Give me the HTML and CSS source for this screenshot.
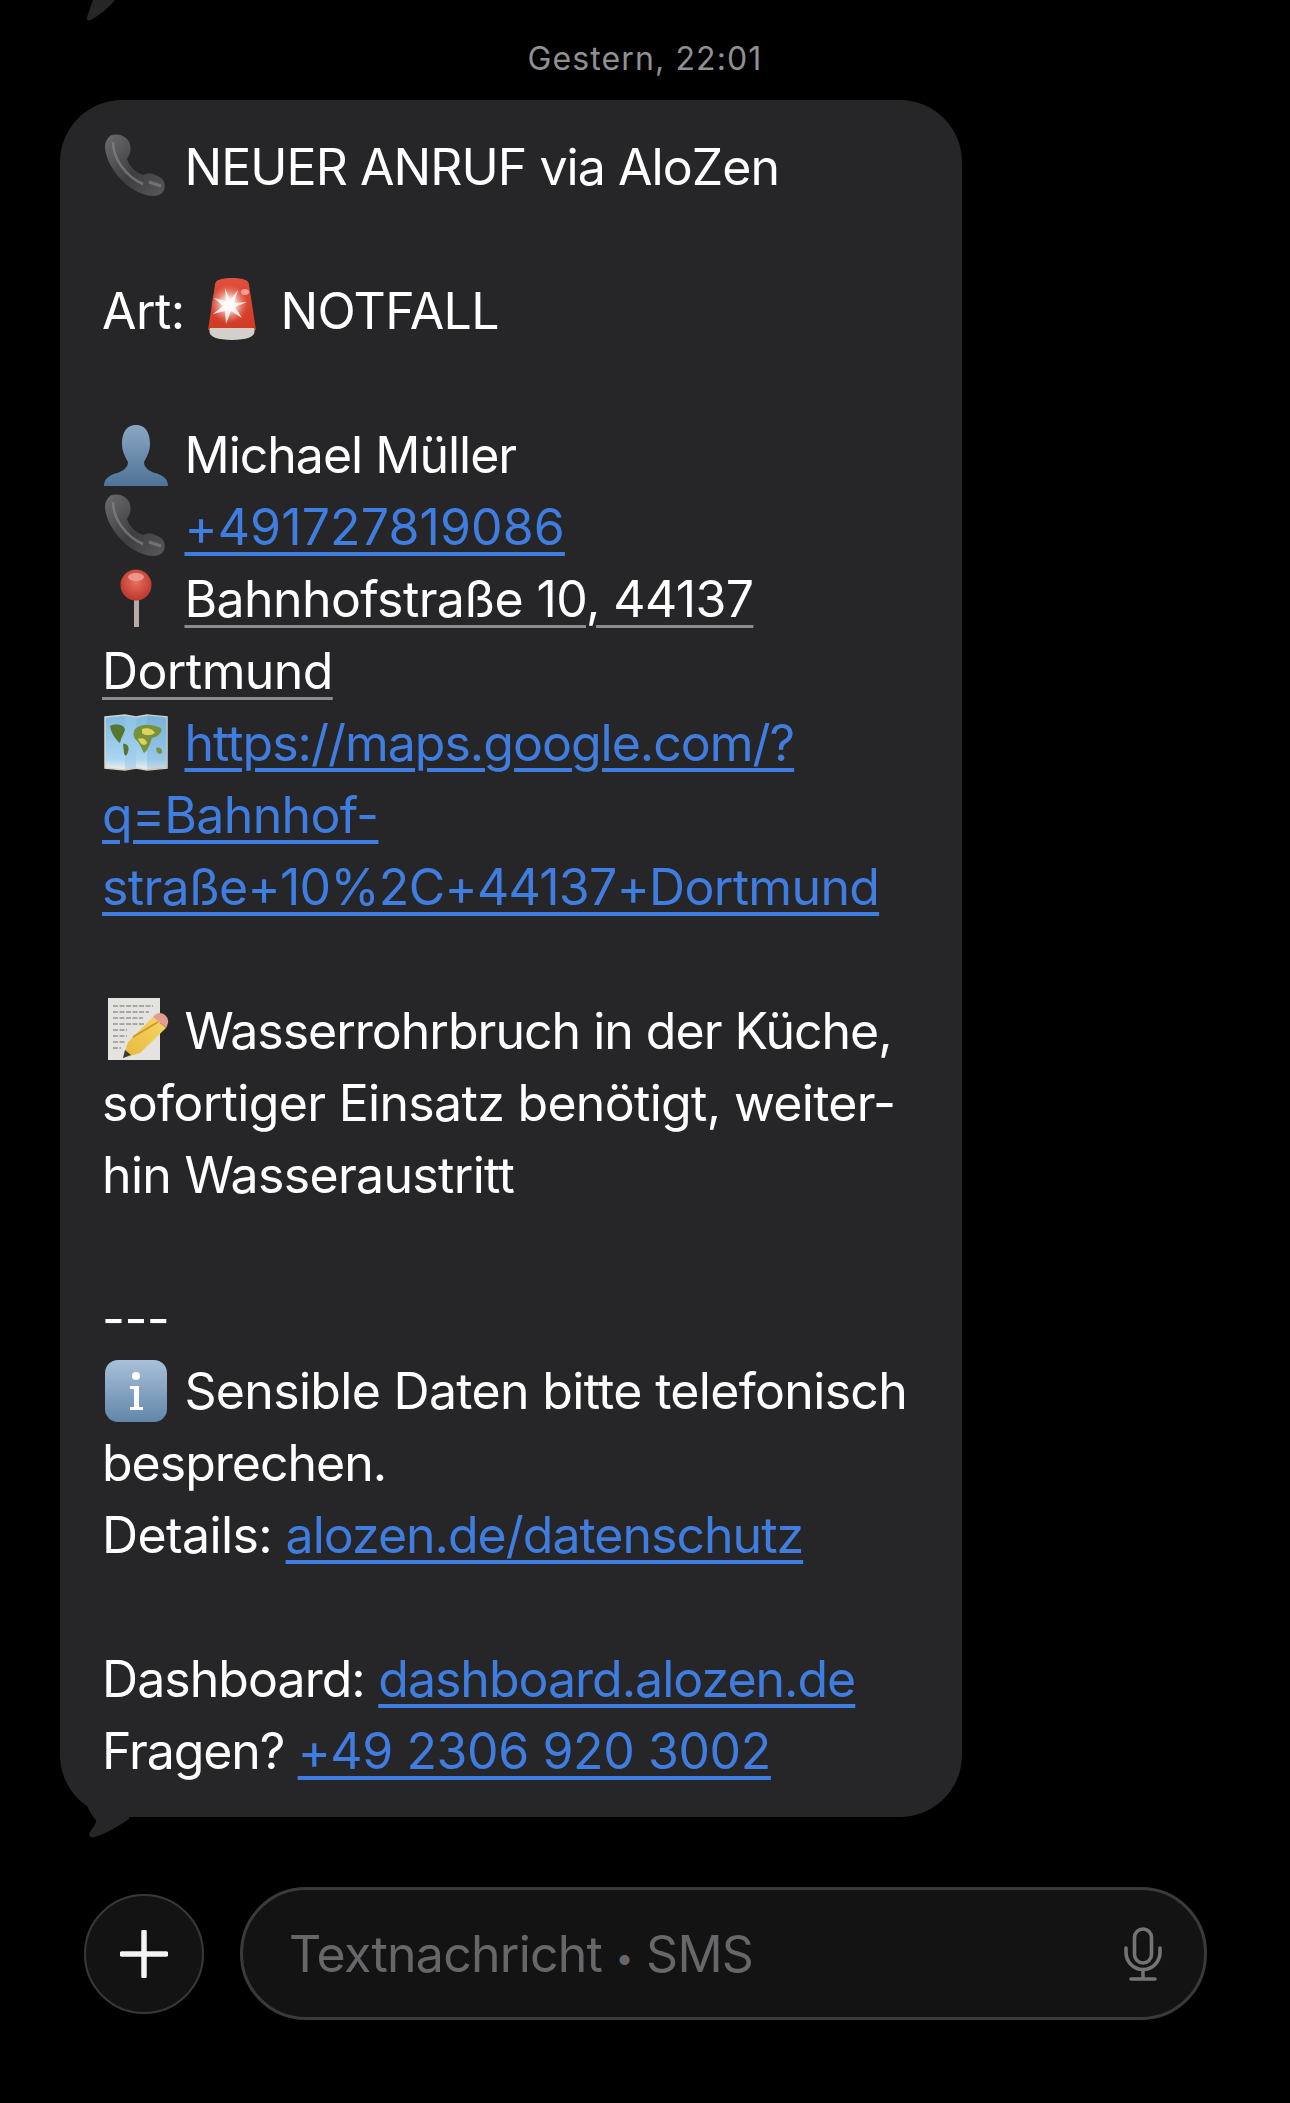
FILE: index.html
```html
<!DOCTYPE html>
<html lang="de">
<head>
<meta charset="utf-8">
<title>SMS</title>
<link rel="stylesheet" href="styles.css">
</head>
<body>
<svg class="prev-tail" width="40" height="22" viewBox="0 0 40 22"><path d="M28 0 C22 8 12 15 4 20 C1 21 -1 20 0 17 L6 0 Z" fill="#262628"/></svg>
<main class="thread">
  <div class="stamp">Gestern, 22:01</div>
  <div class="bubble">
    <div class="line"><svg class="emoji" viewBox="0 0 66 66"><use href="#phone"/></svg> <span class="ls-b">NEUER ANRUF via AloZen</span></div>
    <div class="line blank"></div>
    <div class="line">Art: <svg class="emoji" viewBox="0 0 66 66"><use href="#siren"/></svg> NOTFALL</div>
    <div class="line blank"></div>
    <div class="line"><svg class="emoji" viewBox="0 0 66 66"><use href="#person"/></svg> <span class="ls-c">Michael Müller</span></div>
    <div class="line"><svg class="emoji" viewBox="0 0 66 66"><use href="#phone"/></svg> <a class="link num">+491727819086</a></div>
    <div class="line"><svg class="emoji" viewBox="0 0 66 66"><use href="#pin"/></svg> <span class="addr">Bahnhofstraße 10, 44137</span></div>
    <div class="line"><span class="addr">Dortmund</span></div>
    <div class="line"><svg class="emoji" viewBox="0 0 66 66"><use href="#map"/></svg> <a class="link ls-c">https://maps.google.com/?</a></div>
    <div class="line"><a class="link ls-a">q=Bahnhof-</a></div>
    <div class="line"><a class="link ls-a">straße+10%2C+44137+Dortmund</a></div>
    <div class="line blank"></div>
    <div class="line"><svg class="emoji" viewBox="0 0 66 66"><use href="#memo"/></svg> <span class="ls-c">Wasserrohrbruch in der Küche,</span></div>
    <div class="line ls-a">sofortiger Einsatz benötigt, weiter-</div>
    <div class="line ls-a">hin Wasseraustritt</div>
    <div class="line blank"></div>
    <div class="line">---</div>
    <div class="line"><svg class="emoji" viewBox="0 0 66 66"><use href="#info"/></svg> <span class="ls-a">Sensible Daten bitte telefonisch</span></div>
    <div class="line ls-c">besprechen.</div>
    <div class="line">Details: <a class="link ls-c">alozen.de/datenschutz</a></div>
    <div class="line blank"></div>
    <div class="line"><span class="ls-b">Dashboard:</span> <a class="link ls-c">dashboard.alozen.de</a></div>
    <div class="line"><span class="ls-d">Fragen?</span> <a class="link ls-f">+49 2306 920 3002</a></div>
    <svg class="tail" width="48" height="34" viewBox="0 0 48 34"><path d="M6 0 C8 6 12 12 15 15 C16 18 12 22 9 27 C7 32 10 33 14 32 C26 28 36 22 48 14 L48 0 Z" fill="#262628"/></svg>
  </div>
  <div class="composer">
    <button class="plus"><svg width="48" height="48" viewBox="0 0 48 48"><path d="M24 2V46M2 24H46" stroke="#f4f4f4" stroke-width="5.5" stroke-linecap="round"/></svg></button>
    <div class="field">
      <span class="placeholder">Textnachricht <span class="sep">•</span> SMS</span>
      <svg class="mic" width="38" height="54" viewBox="0 0 38 54" fill="none" stroke="#747476" stroke-width="3.6"><rect x="10.5" y="2" width="17" height="34" rx="8.5"/><path d="M2 21V25C2 35 9.5 42.5 19 42.5S36 35 36 25V21M19 43V51M7 52H31" stroke-linecap="round"/></svg>
    </div>
  </div>
</main>
<svg class="defs" width="0" height="0">
  <defs>
    <linearGradient id="gPhone" x1="0" y1="0" x2="1" y2="1"><stop offset="0" stop-color="#6c6c6f"/><stop offset=".55" stop-color="#3e3e41"/><stop offset="1" stop-color="#58585b"/></linearGradient>
    <linearGradient id="gPerson" x1="0" y1="0" x2="0" y2="1"><stop offset="0" stop-color="#8ba6c4"/><stop offset="1" stop-color="#4f7396"/></linearGradient>
    <linearGradient id="gInfo" x1="0" y1="0" x2="0" y2="1"><stop offset="0" stop-color="#a9c0d9"/><stop offset="1" stop-color="#6186ab"/></linearGradient>
    <linearGradient id="gSiren" x1="0" y1="0" x2="0" y2="1"><stop offset="0" stop-color="#e0503e"/><stop offset="1" stop-color="#cf3a22"/></linearGradient>
    <radialGradient id="gGlow" cx=".5" cy=".5" r=".5"><stop offset="0" stop-color="#fff"/><stop offset=".35" stop-color="#fbd3cb"/><stop offset="1" stop-color="#ee8b7b" stop-opacity="0"/></radialGradient>
    <radialGradient id="gPin" cx=".5" cy=".4" r=".6"><stop offset="0" stop-color="#e9705f"/><stop offset="1" stop-color="#b9362b"/></radialGradient>
    <linearGradient id="gPencil" x1="0" y1="1" x2="1" y2="0"><stop offset="0" stop-color="#e8b93c"/><stop offset="1" stop-color="#f5d664"/></linearGradient>
    <linearGradient id="gSea" x1="0" y1="0" x2="0" y2="1"><stop offset="0" stop-color="#7fb9e2"/><stop offset=".8" stop-color="#a9d6f2"/><stop offset="1" stop-color="#f1efe6"/></linearGradient>
    <symbol id="phone" viewBox="0 0 66 66"><path d="M6 3C10-1 20 0 25 6 29 12 28 20 24 25 26 32 32 38 40 41 46 38 52 40 58 44 63 48 63 56 58 60 52 64 40 62 28 54 14 44 3 28 2 14 2 9 3 6 6 3Z" fill="url(#gPhone)"/><path d="M10 8C10 24 22 42 40 50" fill="none" stroke="#87878a" stroke-width="2.5" opacity=".65"/><path d="M46 48 58 52" stroke="#8a8a8d" stroke-width="3" opacity=".6"/></symbol>
    <symbol id="person" viewBox="0 0 66 66"><path d="M33 3C44 3 47 13 47 22 47 30 43 36 41 40 41 46 46 49 52 51 60 53 65 57 65 64H1C1 57 6 53 14 51 20 49 25 46 25 40 23 36 19 30 19 22 19 13 22 3 33 3Z" fill="url(#gPerson)"/></symbol>
    <symbol id="pin" viewBox="0 0 66 66"><rect x="31" y="32" width="5" height="29" fill="#b8aaa6"/><circle cx="33" cy="19" r="15.5" fill="url(#gPin)"/><ellipse cx="33" cy="11" rx="8" ry="4" fill="#f0a598" opacity=".8"/></symbol>
    <symbol id="map" viewBox="0 0 66 66"><path d="M2 7 22 5 33 7 44 5 64 7V58L44 60 33 58 22 60 2 58Z" fill="url(#gSea)" stroke="#d8d3c5" stroke-width="1.5"/><path d="M22 5 33 7V58L22 60Z" fill="#9cc9ea" opacity=".55"/><path d="M44 5 64 7V58L44 60Z" fill="#5f9bc9" opacity=".25"/><path d="M7 16C13 13 22 15 22 20 20 25 18 28 17 33 13 30 8 23 7 16ZM20 34C24 33 27 37 25 42 24 46 22 47 21 43Z" fill="#56752f"/><path d="M32 19C38 13 50 14 58 18 60 23 54 27 49 28 47 33 46 39 41 43 38 38 37 33 33 30 30 27 30 22 32 19ZM53 38C57 36 60 40 59 43 56 45 53 43 53 38Z" fill="#77933a"/><path d="M39 19C44 17 50 19 52 23 47 26 42 26 39 23ZM35 29C39 27 43 29 44 33 41 37 37 34 35 29Z" fill="#e0d35c"/></symbol>
    <symbol id="memo" viewBox="0 0 66 66"><rect x="5" y="0" width="52" height="62" fill="#e4e3df"/><g stroke="#6d6d70" stroke-width="1" stroke-dasharray="5 1.5"><path d="M10 8H50M10 14H46M10 20H40M10 26H42M10 32H24M10 38H24M10 44H22M10 50H18"/></g><path d="M20 60 25 44 50 19 63 30 37 55Z" fill="url(#gPencil)"/><path d="M30 39 55 24" stroke="#c9952d" stroke-width="1.5"/><path d="M50 19C54 14 58 14 62 17 66 21 66 25 63 30Z" fill="#e59a92"/><path d="M20 60 22 52 28 57Z" fill="#3a3a3a"/></symbol>
    <symbol id="info" viewBox="0 0 66 66"><rect x="2" y="2" width="62" height="62" rx="13" fill="url(#gInfo)"/><circle cx="33" cy="18" r="4" fill="#fff"/><path d="M27 28H36V49H40V52H27V49H31V31H27Z" fill="#fff"/></symbol>
    <symbol id="siren" viewBox="0 0 66 66"><path d="M16 7C16 2 22 0 33 0S50 2 50 7L57 52H9Z" fill="url(#gSiren)"/><path d="M11 50H55C58 58 50 62 33 62S8 58 11 50Z" fill="#d5cfcb"/><circle cx="30" cy="26" r="19" fill="url(#gGlow)"/><path d="M26 10 31 22 39 12 35 25 48 24 36 29 43 40 32 33 27 46 26 33 14 36 24 28 15 20 27 23Z" fill="#fff" opacity=".85"/><ellipse cx="46" cy="14" rx="4" ry="3" fill="#f6b3a6" opacity=".8"/></symbol>
  </defs>
</svg>
</body>
</html>
```

FILE: styles.css
```css
* { box-sizing: border-box; }
html, body { margin: 0; background: #000; }
body {
  position: relative;
  width: 1290px;
  height: 2103px;
  overflow: hidden;
  font-family: Inter, "Liberation Sans", sans-serif;
  color: #fff;
}
.prev-tail { position: absolute; left: 87px; top: 0; }
.defs { position: absolute; }
.thread { display: flex; flex-direction: column; align-items: flex-start; padding-top: 40px; }
.stamp {
  align-self: stretch;
  text-align: center;
  height: 60px;
  font-size: 32px;
  line-height: 38px;
  letter-spacing: 1.1px;
  color: #909093;
}
.bubble {
  position: relative;
  width: 902px;
  margin-left: 60px;
  padding: 31px 0 30px 42px;
  border-radius: 62px;
  background: #262628;
  font-size: 50px;
  letter-spacing: -0.6px;
}
.line { height: 72px; line-height: 72px; white-space: nowrap; }
.emoji { width: 66px; height: 66px; margin: -20px 2px -20px 1px; vertical-align: 5px; }
.ls-a { letter-spacing: -0.68px; }
.ls-b { letter-spacing: -0.95px; }
.ls-c { letter-spacing: -1px; }
.ls-d { letter-spacing: -1.1px; }
.ls-f { letter-spacing: -0.4px; }
.num { letter-spacing: 0.12px; }
.link { color: #3f7de0; text-decoration: underline; text-decoration-thickness: 4px; text-underline-offset: 7px; }
.addr { text-decoration: underline; text-decoration-color: #8c8c8e; text-decoration-thickness: 3px; text-underline-offset: 8px; }
.tail { position: absolute; left: 21px; bottom: -22px; }
.composer { display: flex; align-items: center; gap: 36px; margin: 70px 0 0 84px; }
.plus {
  display: flex;
  align-items: center;
  justify-content: center;
  width: 120px;
  height: 120px;
  padding: 0;
  border: 2px solid #38383a;
  border-radius: 50%;
  background: #131314;
}
.field {
  display: flex;
  align-items: center;
  justify-content: space-between;
  width: 967px;
  height: 133px;
  padding: 0 42px 0 46px;
  border: 3px solid #3a3a3c;
  border-radius: 66px;
  background: #131314;
}
.placeholder { font-size: 50px; letter-spacing: -0.75px; color: #67676a; }
.sep { font-size: 32px; vertical-align: 3px; }
```
